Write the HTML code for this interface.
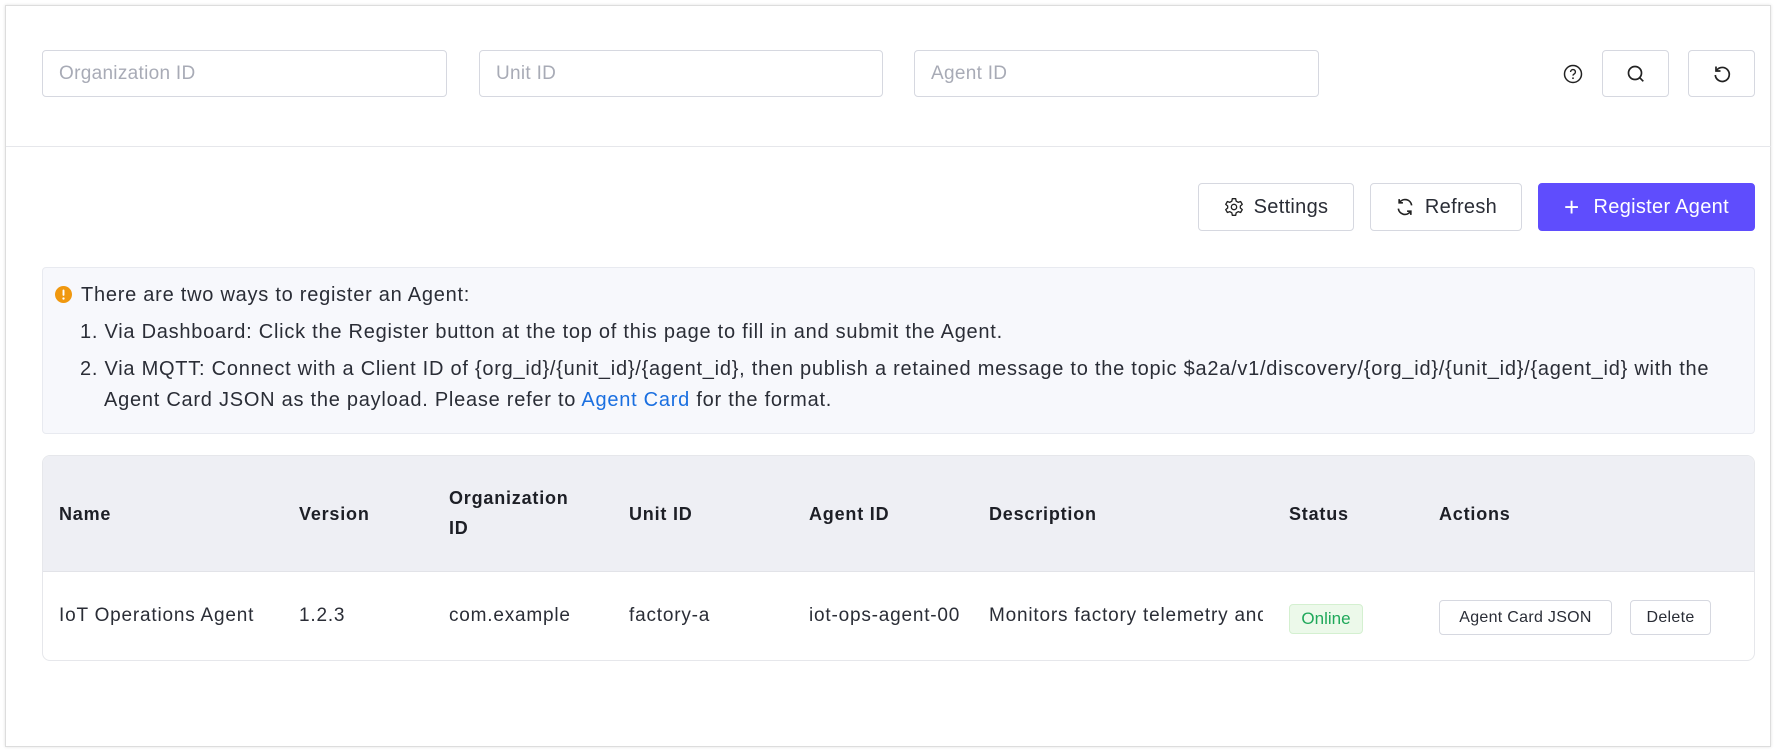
<!DOCTYPE html>
<html><head><meta charset="utf-8"><style>
*{box-sizing:border-box;margin:0;padding:0}
body{width:1774px;height:750px;background:#fff;font-family:"Liberation Sans",Arial,sans-serif;color:#2a2d36;position:relative;overflow:hidden}
.frame{position:absolute;left:5px;top:5px;width:1766px;height:742px;border:1px solid #ddd;box-shadow:0 0 3px rgba(0,0,0,.12)}
.abs{position:absolute}
.inp{position:absolute;top:50px;height:47px;border:1px solid #d6d8e0;border-radius:4px;font-size:19px;color:#a8abb6;padding:0 16px;line-height:45px;letter-spacing:.3px}
.btn{position:absolute;border:1px solid #d6d8e0;border-radius:4px;background:#fff;display:flex;align-items:center;justify-content:center;font-size:20px;color:#2a2d36;gap:10px;letter-spacing:.3px}
.hr{position:absolute;left:6px;right:3px;top:146px;height:1px;background:#e6e7eb}
.alert{position:absolute;left:42px;top:267px;width:1713px;height:167px;background:#f7f8fc;border:1px solid #e8eaf0;border-radius:4px;font-size:20px;letter-spacing:.75px;color:#2a2d36}
.alert div{position:absolute;white-space:nowrap}
.tbl{position:absolute;left:42px;top:455px;width:1713px;height:206px;border:1px solid #e6e7eb;border-radius:8px;overflow:hidden}
.th{position:absolute;left:0;top:0;width:100%;height:116px;background:#eeeff4;border-bottom:1px solid #e2e3e8}
.h{position:absolute;font-weight:bold;font-size:18px;letter-spacing:.8px;color:#1d1f26;line-height:30px}
.c{position:absolute;top:149px;font-size:19px;letter-spacing:.8px;color:#2a2d36;white-space:nowrap}
</style></head><body>
<div class="frame"></div>
<div class="inp" style="left:42px;width:405px">Organization ID</div>
<div class="inp" style="left:479px;width:404px">Unit ID</div>
<div class="inp" style="left:914px;width:405px">Agent ID</div>
<svg class="abs" style="left:1563px;top:64px" width="20" height="20" viewBox="0 0 20 20"><circle cx="10" cy="10" r="8.5" fill="none" stroke="#222" stroke-width="1.5"/><path d="M7.6 8a2.4 2.4 0 1 1 3.4 2.1c-.7.4-1 .8-1 1.5" fill="none" stroke="#222" stroke-width="1.4"/><circle cx="10" cy="14.2" r=".9" fill="#222"/></svg>
<div class="btn" style="left:1602px;top:50px;width:67px;height:47px"><svg width="20" height="20" viewBox="0 0 20 20"><circle cx="9" cy="9" r="6.5" fill="none" stroke="#222" stroke-width="1.7"/><path d="M13.7 13.7l3.6 3.6" stroke="#222" stroke-width="1.7"/></svg></div>
<div class="btn" style="left:1688px;top:50px;width:67px;height:47px"><svg width="20" height="20" viewBox="0 0 20 20"><path d="M4.5 6.5A7 7 0 1 1 3.3 11" fill="none" stroke="#222" stroke-width="1.7"/><path d="M4 2.5v4.5h4.5" fill="none" stroke="#222" stroke-width="1.7"/></svg></div>
<div class="hr"></div>
<div class="btn" style="left:1198px;top:183px;width:156px;height:48px"><svg width="20" height="20" viewBox="0 0 24 24"><path d="M10 2h4l.6 3 2.4 1.4 2.9-1 2 3.4-2.3 2v2.4l2.3 2-2 3.4-2.9-1L14.6 19l-.6 3h-4l-.6-3L7 17.6l-2.9 1-2-3.4 2.3-2v-2.4l-2.3-2 2-3.4 2.9 1L9.4 5z" fill="none" stroke="#222" stroke-width="1.6" stroke-linejoin="round"/><circle cx="12" cy="12" r="3.2" fill="none" stroke="#222" stroke-width="1.6"/></svg>Settings</div>
<div class="btn" style="left:1370px;top:183px;width:152px;height:48px"><svg width="20" height="20" viewBox="0 0 24 24"><path d="M20 10a8 8 0 0 0-14.5-3.5M4 14a8 8 0 0 0 14.5 3.5" fill="none" stroke="#222" stroke-width="2"/><path d="M5 2.5v4.5h4.5M19 21.5V17h-4.5" fill="none" stroke="#222" stroke-width="2"/></svg>Refresh</div>
<div class="btn" style="left:1538px;top:183px;width:217px;height:48px;background:#5f4dfd;border-color:#5f4dfd;color:#fff;gap:14px"><span style="font-size:26px;font-weight:300;line-height:20px">+</span>Register Agent</div>
<div class="alert">
<svg class="abs" style="left:12px;top:18px" width="17" height="17" viewBox="0 0 16 16"><circle cx="8" cy="8" r="8" fill="#f0980f"/><rect x="7.1" y="3.3" width="1.8" height="6" rx=".9" fill="#fff"/><circle cx="8" cy="11.8" r="1.1" fill="#fff"/></svg>
<div style="left:38px;top:16px">There are two ways to register an Agent:</div>
<div style="left:37px;top:53px">1. Via Dashboard: Click the Register button at the top of this page to fill in and submit the Agent.</div>
<div style="left:37px;top:90px">2. Via MQTT: Connect with a Client ID of {org_id}/{unit_id}/{agent_id}, then publish a retained message to the topic $a2a/v1/discovery/{org_id}/{unit_id}/{agent_id} with the</div>
<div style="left:61px;top:121px">Agent Card JSON as the payload. Please refer to <span style="color:#1a6fe0">Agent Card</span> for the format.</div>
</div>
<div class="tbl">
<div class="th"></div>
<div class="h" style="left:16px;top:43px">Name</div>
<div class="h" style="left:256px;top:43px">Version</div>
<div class="h" style="left:406px;top:27px">Organization<br>ID</div>
<div class="h" style="left:586px;top:43px">Unit ID</div>
<div class="h" style="left:766px;top:43px">Agent ID</div>
<div class="h" style="left:946px;top:43px">Description</div>
<div class="h" style="left:1246px;top:43px">Status</div>
<div class="h" style="left:1396px;top:43px">Actions</div>
<div class="c" style="left:16px">IoT Operations Agent</div>
<div class="c" style="left:256px">1.2.3</div>
<div class="c" style="left:406px">com.example</div>
<div class="c" style="left:586px">factory-a</div>
<div class="c" style="left:766px;width:196px;overflow:hidden">iot-ops-agent-00</div>
<div class="c" style="left:946px;width:274px;overflow:hidden">Monitors factory telemetry and</div>
<div class="abs" style="left:1246px;top:148px;width:74px;height:30px;background:#ecf9ea;border:1px solid #d4f0d0;border-radius:4px;color:#1fa85a;font-size:17px;text-align:center;line-height:28px">Online</div>
<div class="btn" style="left:1396px;top:144px;width:173px;height:35px;font-size:16px">Agent Card JSON</div>
<div class="btn" style="left:1587px;top:144px;width:81px;height:35px;font-size:16px">Delete</div>
</div>
</body></html>
